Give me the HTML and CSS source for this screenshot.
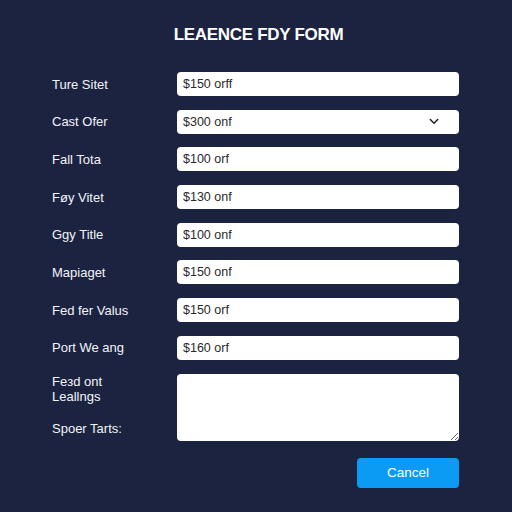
FILE: index.html
```html
<!DOCTYPE html>
<html lang="en">
<head>
  <meta charset="UTF-8">
  <meta name="viewport" content="width=device-width, initial-scale=1.0">
  <title>Leaence Fdy Form</title>
  <link rel="stylesheet" href="styles.css">
</head>
<body>
  <div class="container">
    <h1>LEAENCE FDY FORM</h1>

    <form class="form">
      <label for="f1">Ture Sitet</label>
      <input id="f1" type="text" value="$150 orff">

      <label for="f2">Cast Ofer</label>
      <div class="select" id="f2">
        <span>$300 onf</span>
        <svg width="10" height="7" viewBox="0 0 10 7"><path d="M1.3 1.5 L5 5.2 L8.7 1.5" fill="none" stroke="#222" stroke-width="1.5" stroke-linecap="round" stroke-linejoin="round"/></svg>
      </div>

      <label for="f3">Fall Tota</label>
      <input id="f3" type="text" value="$100 orf">

      <label for="f4">Føy Vitet</label>
      <input id="f4" type="text" value="$130 onf">

      <label for="f5">Ggy Title</label>
      <input id="f5" type="text" value="$100 onf">

      <label for="f6">Mapiaget</label>
      <input id="f6" type="text" value="$150 onf">

      <label for="f7">Fed fer Valus</label>
      <input id="f7" type="text" value="$150 orf">

      <label for="f8">Port We ang</label>
      <input id="f8" type="text" value="$160 orf">

      <div class="multi-label">
        <label for="f9">Feзd ont<br>Leallngs</label>
        <span>Spoer Tarts:</span>
      </div>
      <textarea id="f9"></textarea>
    </form>

    <div class="actions">
      <button type="button">Cancel</button>
    </div>
  </div>
</body>
</html>
```

FILE: styles.css
```css
body {
  font-family: 'Liberation Sans', Arial, sans-serif;
  background: #1c2341;
  color: #ffffff;
  margin: 0;
  padding: 0;
}

.container {
  width: 407px;
  padding: 24px 0 0 52px;
}

h1 {
  font-size: 17px;
  line-height: 22px;
  font-weight: bold;
  text-align: center;
  margin: 0 0 26px;
  padding-left: 6px;
  letter-spacing: -0.3px;
}

.form {
  display: grid;
  grid-template-columns: 125px 282px;
  row-gap: 13.7px;
  align-items: center;
}

label, .multi-label span {
  font-size: 13px;
  color: #f2f4f8;
}

input, .select {
  height: 24px;
  box-sizing: border-box;
  border: none;
  border-radius: 4px;
  background: #ffffff;
  color: #2a2a2a;
  font-family: 'Liberation Sans', Arial, sans-serif;
  font-size: 12.5px;
  padding: 0 6px;
  margin: 0;
  outline: none;
}

.select {
  display: flex;
  align-items: center;
  justify-content: space-between;
  padding-right: 20px;
}

.multi-label {
  align-self: stretch;
  display: flex;
  flex-direction: column;
  justify-content: space-between;
  padding: 0 0 5px;
}

.multi-label label {
  line-height: 15px;
}

textarea {
  height: 67px;
  box-sizing: border-box;
  border: none;
  border-radius: 4px;
  background: #ffffff;
  margin: 0;
  padding: 6px;
  resize: both;
}

.actions {
  display: flex;
  justify-content: flex-end;
  margin-top: 17px;
}

button {
  width: 102px;
  height: 30px;
  border: none;
  border-radius: 4px;
  background-color: #0b9bf5;
  color: #ffffff;
  font-family: 'Liberation Sans', Arial, sans-serif;
  font-size: 13.5px;
  cursor: pointer;
}
```
